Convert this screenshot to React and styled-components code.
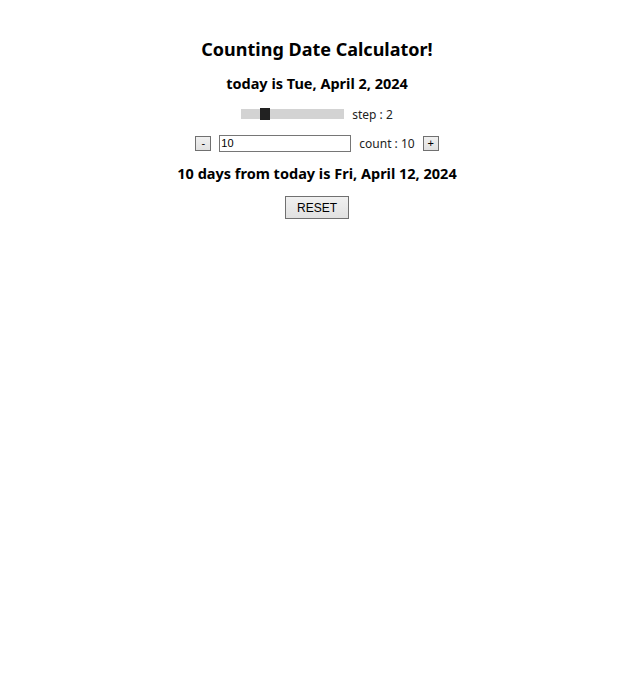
import { useState } from "react";
import styled, { createGlobalStyle } from "styled-components";

const GlobalStyle = createGlobalStyle`
    body {
        margin: 0;
        background: #fff;
        font-family: "Noto Sans", "Open Sans", sans-serif;
        color: #000;
    }
`;

const Container = styled.main`
    display: flex;
    flex-direction: column;
    align-items: center;
    padding: 36px 0 0 4px;
`;

const Title = styled.h1`
    margin: 0 0 9px;
    font-size: 18px;
    font-weight: 700;
    line-height: 27px;
`;

const SubTitle = styled.h3`
    margin: 0 0 8px;
    font-size: 14.5px;
    font-weight: 700;
    line-height: 22px;
`;

const Row = styled.div`
    display: flex;
    align-items: center;
    gap: 8px;
    height: 24px;
    margin-bottom: 5px;
    font-size: 12px;
    color: #222;
`;

const Range = styled.input`
    appearance: none;
    -webkit-appearance: none;
    width: 103px;
    height: 10px;
    margin: 0;
    background: #d3d3d3;
    outline: none;

    &::-webkit-slider-thumb {
        -webkit-appearance: none;
        width: 10px;
        height: 12px;
        background: #222;
        cursor: pointer;
    }
`;

const SmallButton = styled.button`
    width: 16px;
    height: 15px;
    padding: 0;
    font-size: 11px;
    line-height: 1;
    border: 1px solid #707070;
    border-radius: 0;
    background: linear-gradient(#f0f0f0, #e1e1e1);
    font-family: "Liberation Sans", sans-serif;
    color: #000;
`;

const TextField = styled.input`
    box-sizing: border-box;
    width: 132px;
    height: 17px;
    padding: 0 1px;
    font-size: 11px;
    font-family: "Liberation Sans", sans-serif;
    border: 1px solid #767676;
    border-radius: 0;
    color: #000;
`;

const Result = styled.h3`
    margin: 2px 0 12px;
    font-size: 14.5px;
    font-weight: 700;
    line-height: 22px;
`;

const ResetButton = styled.button`
    width: 64px;
    height: 23px;
    padding: 0;
    font-size: 12px;
    font-family: "Liberation Sans", sans-serif;
    border: 1px solid #707070;
    border-radius: 0;
    background: linear-gradient(#f0f0f0, #e1e1e1);
    color: #000;
`;

const DAYS = ["Sun", "Mon", "Tue", "Wed", "Thu", "Fri", "Sat"];
const MONTHS = ["January", "February", "March", "April", "May", "June", "July",
    "August", "September", "October", "November", "December"];

const fmt = (d) => `${DAYS[d.getDay()]}, ${MONTHS[d.getMonth()]} ${d.getDate()}, ${d.getFullYear()}`;

export default function App() {
    const [step, setStep] = useState(2);
    const [count, setCount] = useState(10);
    const today = new Date(2024, 3, 2);
    const target = new Date(2024, 3, 2 + count);

    return (
        <>
            <GlobalStyle />
            <Container>
                <Title>Counting Date Calculator!</Title>
                <SubTitle>today is {fmt(today)}</SubTitle>
                <Row>
                    <Range type="range" min="0" max="10" value={step}
                        onChange={(e) => setStep(Number(e.target.value))} />
                    <span>step : {step}</span>
                </Row>
                <Row>
                    <SmallButton onClick={() => setCount(c => c - step)}>-</SmallButton>
                    <TextField value={count} onChange={(e) => setCount(Number(e.target.value) || 0)} />
                    <span>count : {count}</span>
                    <SmallButton onClick={() => setCount(c => c + step)}>+</SmallButton>
                </Row>
                <Result>{count} days from today is {fmt(target)}</Result>
                <ResetButton onClick={() => { setStep(1); setCount(0); }}>RESET</ResetButton>
            </Container>
        </>
    );
}
